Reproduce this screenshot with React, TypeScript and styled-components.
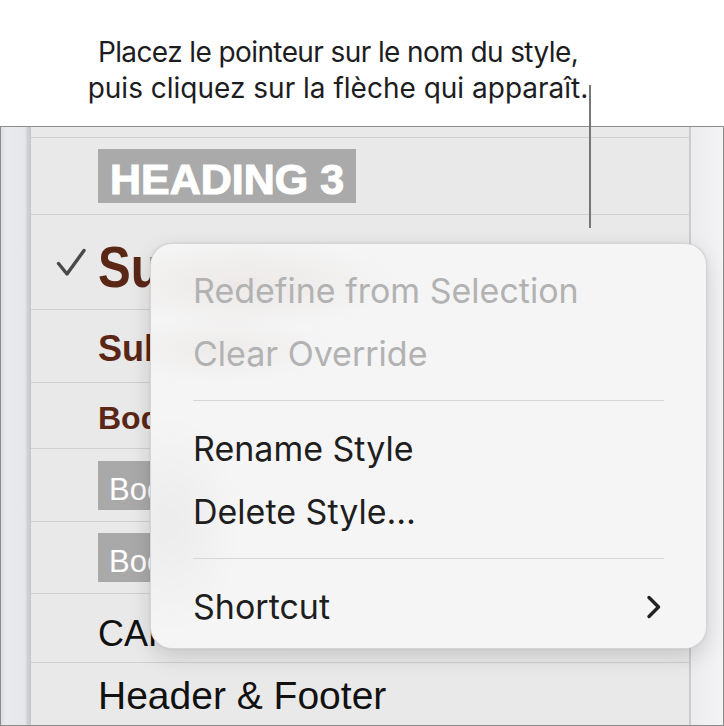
import React from "react";
import styled, { createGlobalStyle } from "styled-components";

const GlobalStyle = createGlobalStyle`
  html, body { margin: 0; padding: 0; background: #ffffff; }
  body {
    width: 724px;
    height: 726px;
    overflow: hidden;
    font-family: "Liberation Sans", Arial, sans-serif;
  }
  * { box-sizing: border-box; }
`;

const Page = styled.div`
  position: relative;
  width: 724px;
  height: 726px;
  display: flex;
  flex-direction: column;
`;

const Caption = styled.div`
  height: 126px;
  flex: none;
  padding: 34px 48px 0 0;
  display: flex;
  flex-direction: column;
  align-items: center;
  font-family: Inter, "Liberation Sans", sans-serif;
  font-size: 28px;
  line-height: 36px;
  color: #1d1d1f;
`;

const CaptionLine = styled.div<{ $tracking?: number }>`
  white-space: nowrap;
  letter-spacing: ${(p) => p.$tracking ?? 0}px;
`;

const Leader = styled.div`
  position: absolute;
  left: 589px;
  top: 85px;
  width: 2px;
  height: 143px;
  background: #777777;
  z-index: 3;
`;

const Panel = styled.div`
  flex: 1;
  display: grid;
  grid-template-columns: 30px 1fr 2px 32px;
  border: 1px solid #8c8c8c;
  background: #e9e9e9;
`;

const LeftGutter = styled.div`
  background: linear-gradient(
    to right,
    #dcdee2 0px,
    #e8eaee 5px,
    #e5e7eb 24px,
    #d3d4d7 26px,
    #c4c5c7 30px
  );
`;

const RightRule = styled.div`
  background: #cbcbcb;
`;

const RightGutter = styled.div`
  background: linear-gradient(to right, #ececee, #f3f3f5);
`;

const List = styled.div`
  display: flex;
  flex-direction: column;
  background: #e9e9e9;
`;

const Row = styled.div<{ $h: number; $last?: boolean }>`
  height: ${(p) => p.$h}px;
  flex: none;
  display: grid;
  grid-template-columns: 67px 1fr;
  align-items: center;
  border-bottom: ${(p) => (p.$last ? "none" : "1px solid #d0d0d0")};
  overflow: hidden;
  white-space: nowrap;
`;

const CheckCell = styled.div`
  padding-left: 25px;
  display: flex;
  align-items: center;
`;

const Label = styled.div<{
  $size: number;
  $weight?: number;
  $color?: string;
  $dy?: number;
  $narrow?: boolean;
}>`
  grid-column: 2;
  justify-self: start;
  margin-top: ${(p) => p.$dy ?? 0}px;
  font-family: ${(p) =>
    p.$narrow
      ? `"Liberation Sans Narrow", "Liberation Sans", Arial, sans-serif`
      : `"Liberation Sans", Arial, sans-serif`};
  font-size: ${(p) => p.$size}px;
  font-weight: ${(p) => p.$weight ?? 400};
  color: ${(p) => p.$color ?? "#111111"};
  line-height: 1.15;
  transform: ${(p) => (p.$narrow ? "scaleX(0.86)" : "none")};
  transform-origin: left center;
`;

const HeadingTag = styled.div`
  grid-column: 2;
  justify-self: start;
  height: 54px;
  padding: 6px 12px 0;
  background: #aaaaaa;
  color: #ffffff;
  font-family: "Liberation Sans", Arial, sans-serif;
  font-weight: 700;
  font-size: 43px;
  line-height: 48px;
  -webkit-text-stroke: 1.1px #ffffff;
`;

const BodyTag = styled.div<{ $dy?: number }>`
  grid-column: 2;
  justify-self: start;
  margin-top: ${(p) => p.$dy ?? 0}px;
  height: 49px;
  padding: 8px 12px 0 11px;
  background: #a9a9a9;
  color: #ffffff;
  font-family: "Liberation Sans", Arial, sans-serif;
  font-size: 31px;
  line-height: 41px;
`;

const Menu = styled.div`
  position: absolute;
  left: 150px;
  top: 243px;
  width: 557px;
  height: 406px;
  padding: 15px 42px 10px;
  border-radius: 22px;
  background:
    radial-gradient(ellipse 150px 45px at 95px 40px, rgba(120, 70, 50, 0.07), rgba(120, 70, 50, 0) 100%),
    radial-gradient(ellipse 110px 35px at 70px 105px, rgba(120, 70, 50, 0.05), rgba(120, 70, 50, 0) 100%),
    radial-gradient(ellipse 70px 110px at 20px 280px, rgba(0, 0, 0, 0.035), rgba(0, 0, 0, 0) 100%),
    #f5f5f5;
  border: 1px solid rgba(0, 0, 0, 0.13);
  box-shadow: 0 8px 22px rgba(0, 0, 0, 0.14), 0 0 3px rgba(0, 0, 0, 0.08);
  display: flex;
  flex-direction: column;
  z-index: 4;
`;

const MenuItem = styled.div<{ $disabled?: boolean }>`
  height: 63px;
  flex: none;
  display: flex;
  align-items: center;
  justify-content: space-between;
  font-family: Inter, "Liberation Sans", sans-serif;
  font-size: 34px;
  line-height: 40px;
  color: ${(p) => (p.$disabled ? "#b2b2b2" : "#1e1e1e")};
  white-space: nowrap;
`;

const MenuSeparator = styled.div`
  height: 1px;
  flex: none;
  margin: 15px 0 16px;
  background: #d6d6d6;
`;

const Check = () => (
  <svg width="30" height="29" viewBox="0 0 30 29" aria-hidden>
    <polyline
      points="2.5,15.5 11,26 28,2.5"
      fill="none"
      stroke="#4a4a4a"
      strokeWidth="3.4"
      strokeLinecap="round"
      strokeLinejoin="round"
    />
  </svg>
);

const Chevron = () => (
  <svg width="18" height="26" viewBox="0 0 18 26" aria-hidden style={{ marginRight: 1 }}>
    <polyline
      points="4,3.5 13.5,13 4,22.5"
      fill="none"
      stroke="#222222"
      strokeWidth="3.4"
      strokeLinecap="round"
      strokeLinejoin="round"
    />
  </svg>
);

const BROWN = "#5a2616";

export default function App() {
  return (
    <>
      <GlobalStyle />
      <Page>
        <Caption>
          <CaptionLine $tracking={-0.6}>Placez le pointeur sur le nom du style,</CaptionLine>
          <CaptionLine>puis cliquez sur la flèche qui apparaît.</CaptionLine>
        </Caption>
        <Panel>
          <LeftGutter />
          <List>
            <Row $h={11} />
            <Row $h={77}>
              <HeadingTag>HEADING 3</HeadingTag>
            </Row>
            <Row $h={95}>
              <CheckCell>
                <Check />
              </CheckCell>
              <Label $size={57} $weight={700} $color={BROWN} $dy={12} $narrow>
                Subtitle
              </Label>
            </Row>
            <Row $h={73}>
              <Label $size={36} $weight={700} $color={BROWN} $dy={6}>
                Subheading
              </Label>
            </Row>
            <Row $h={66}>
              <Label $size={32} $weight={700} $color={BROWN} $dy={5}>
                Body Bold
              </Label>
            </Row>
            <Row $h={73}>
              <BodyTag $dy={1}>Body Small</BodyTag>
            </Row>
            <Row $h={72}>
              <BodyTag>Body</BodyTag>
            </Row>
            <Row $h={69}>
              <Label $size={36} $dy={11}>
                CAPTION
              </Label>
            </Row>
            <Row $h={62} $last>
              <Label $size={39} $dy={5}>
                Header &amp; Footer
              </Label>
            </Row>
          </List>
          <RightRule />
          <RightGutter />
        </Panel>
        <Leader />
        <Menu>
          <MenuItem $disabled>Redefine from Selection</MenuItem>
          <MenuItem $disabled>Clear Override</MenuItem>
          <MenuSeparator />
          <MenuItem>Rename Style</MenuItem>
          <MenuItem>Delete Style…</MenuItem>
          <MenuSeparator />
          <MenuItem>
            <span>Shortcut</span>
            <Chevron />
          </MenuItem>
        </Menu>
      </Page>
    </>
  );
}
